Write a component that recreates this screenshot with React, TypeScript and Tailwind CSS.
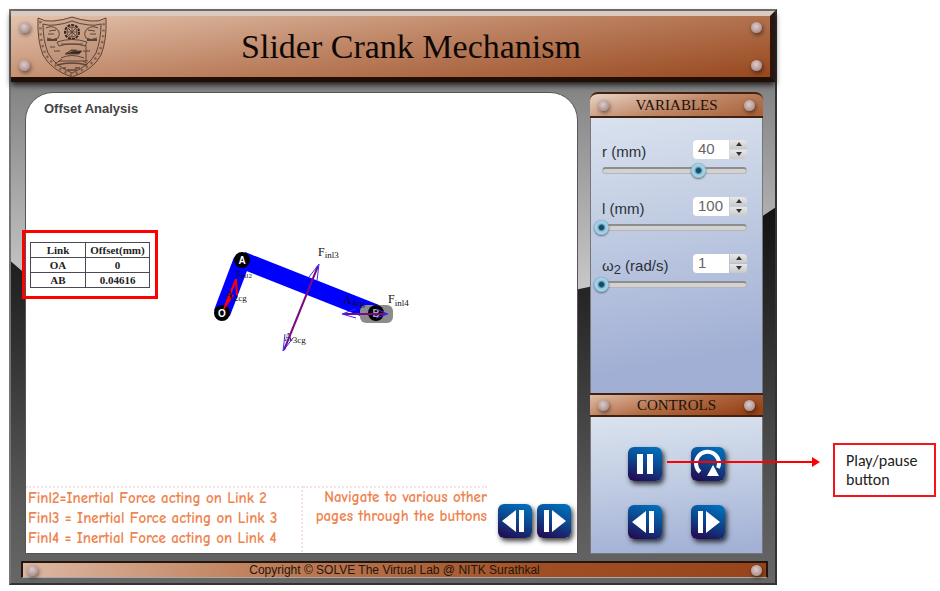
import { useState } from 'react';

const serif = 'font-["Liberation_Serif",serif]';

function Rivet() {
  return (
    <span
      aria-hidden="true"
      className="block h-[11px] w-[11px] shrink-0 rounded-full bg-[radial-gradient(circle_at_45%_40%,#dccbcb_0%,#bda3a3_50%,#8f7676_100%)] shadow-[1px_2px_4px_rgba(0,0,0,0.5)]"
    />
  );
}

function Emblem() {
  return (
    <svg viewBox="0 0 70 62" className="h-[62px] w-[70px]" fill="none" stroke="#5f4436" strokeWidth="1" aria-label="Institute emblem" role="img">
      <path d="M1 2 Q8 6 16 5 Q27 4 35 1 Q43 4 54 5 Q62 6 69 2 Q70 24 64 39 Q56 54 35 61 Q14 54 6 39 Q0 24 1 2Z" fill="#b08a74" fillOpacity="0.4" />
      <path d="M6 8 Q12 10 18 9 Q28 8 35 5 Q42 8 52 9 Q58 10 64 8 Q64 24 59 37 Q52 50 35 57 Q18 50 11 37 Q6 24 6 8Z" />
      <path d="M3.500 5 Q2.500 25 8.500 38 Q17 52 35 59 Q53 52 61.500 38 Q67.500 25 66.500 5" strokeWidth="2.500" strokeDasharray="2 4" opacity="0.65" />
      <circle cx="35" cy="16" r="7" stroke="#33241c" strokeWidth="2" strokeDasharray="3 1" />
      <circle cx="35" cy="16" r="5" />
      <path d="M30 16h10M35 11v10M31.500 12.500l7 7M38.500 12.500l-7 7" />
      <path d="M9 12q6-3 11 1q4 4 1 9q-5 3-11 0M61 12q-6-3-11 1q-4 4-1 9q5 3 11 0M12 15l7-1M11 18h6M58 15l-7-1M59 18h-6" />
      <path d="M10 24h10M50 24h10" strokeWidth="2" />
      <path d="M20 26q15-5 30 0l-2 4q-13-4-26 0ZM24 28h22" />
      <path d="M13 31h5M17 35h6M24 42q10-5 23 0M22 45h29M49 29v16M46 35h7M18 48l7-5M51 48l-5-3" />
      <path d="M28 38h14l3-3h-12ZM31 37l3-3h6" fill="#33241c" />
      <path d="M20 49q15-4 30 0M26 52h3M38 52h5M30 54h10" strokeWidth="1.500" />
    </svg>
  );
}

type IconName = 'pause' | 'replay' | 'back' | 'forward';

function IconButton({ icon, label, onClick }: { icon: IconName; label: string; onClick?: () => void }) {
  return (
    <button
      type="button"
      aria-label={label}
      onClick={onClick}
      className="h-[34px] w-[34px] shrink-0 rounded-md bg-[linear-gradient(200deg,#0070bd_5%,#0b4a91_45%,#211057_90%)] shadow-[2px_3px_5px_rgba(0,0,0,0.75)]"
    >
      <svg viewBox="0 0 34 34" className="h-full w-full" fill="#fff">
        {icon === 'pause' && <path d="M9 7h6v20H9zM19 7h6v20h-6z" />}
        {icon === 'back' && <path d="M4 17 18 6v22zM21 6h5v22h-5z" />}
        {icon === 'forward' && <path d="M7 6h5v22H7zM15 6l14 11-14 11z" />}
        {icon === 'replay' && (
          <>
            <path d="M9 25 A11.500 11.500 0 1 1 27 21" fill="none" stroke="#fff" strokeWidth="4" />
            <path d="M16 29 22 18 28 29z" />
          </>
        )}
      </svg>
    </button>
  );
}

function PanelHeading({ children, rounded }: { children: string; rounded?: boolean }) {
  return (
    <div
      className={`flex items-center justify-between border-y-2 border-[#42210f] px-2 ${
        rounded
          ? 'h-[26px] rounded-t-lg bg-[linear-gradient(165deg,#e6cdbd_5%,#c08a6a_50%,#a9633b_95%)]'
          : 'h-6 bg-[linear-gradient(165deg,#e0bda6_0%,#b06a42_50%,#974217_90%)]'
      }`}
    >
      <Rivet />
      <h2 className={`${serif} text-[15px] leading-5 text-[#1c100a]`}>{children}</h2>
      <Rivet />
    </div>
  );
}

interface VariableProps {
  id: string;
  label: React.ReactNode;
  min: number;
  max: number;
  initial: number;
}

const stepper = 'flex flex-1 items-center justify-center bg-[linear-gradient(180deg,#e8e8e8,#c9c9c9)]';

function Variable({ id, label, min, max, initial }: VariableProps) {
  const [value, setValue] = useState(initial);
  const update = (next: number) => setValue(Math.min(max, Math.max(min, next || min)));
  return (
    <div className="pb-[18px]">
      <div className="flex h-5 items-center pl-2 pr-2">
        <label htmlFor={id} className="flex-1 pt-[6px] text-[15px] leading-5 text-[#2b3038]">
          {label}
        </label>
        <input
          id={id}
          inputMode="numeric"
          value={value}
          onChange={(e) => update(Number(e.target.value))}
          className="h-[19px] w-9 rounded-l-sm bg-white pl-[5px] text-[15px] leading-5 text-[#666]"
        />
        <div className="ml-px flex h-[19px] w-[17px] flex-col gap-px">
          <button type="button" aria-label="Increase" onClick={() => update(value + 1)} className={`${stepper} rounded-tr-sm`}>
            <svg viewBox="0 0 8 4" className="h-1 w-2" fill="#333"><path d="M4 0 7 4H1z" /></svg>
          </button>
          <button type="button" aria-label="Decrease" onClick={() => update(value - 1)} className={`${stepper} rounded-br-sm`}>
            <svg viewBox="0 0 8 4" className="h-1 w-2" fill="#333"><path d="M4 4 1 0h6z" /></svg>
          </button>
        </div>
      </div>
      <div className="mt-[3px] grid items-center">
        <span className="col-start-1 row-start-1 mx-2 h-[7px] rounded-full border border-t-2 border-[#b5b5b5] border-t-[#8d8d8d] bg-[#d2d2d2]" />
        <input
          type="range"
          aria-label={`${id} slider`}
          min={min}
          max={max}
          value={value}
          onChange={(e) => update(Number(e.target.value))}
          className="col-start-1 row-start-1 h-4 w-full appearance-none bg-transparent [&::-webkit-slider-thumb]:h-[15px] [&::-webkit-slider-thumb]:w-[15px] [&::-webkit-slider-thumb]:appearance-none [&::-webkit-slider-thumb]:rounded-full [&::-webkit-slider-thumb]:bg-[radial-gradient(circle,#174a63_0px,#174a63_2px,#8fc6df_4px,#a9d6ea_6px,#6fa3bd_8px)] [&::-webkit-slider-thumb]:shadow-[0_1px_2px_rgba(0,0,0,0.5)]"
        />
      </div>
    </div>
  );
}

function Linkage() {
  return (
    <svg viewBox="200 230 220 130" className="absolute left-[174px] top-[137px] h-[130px] w-[220px]" role="img" aria-label="Slider crank linkage">
      <path d="M222 313 242 260" stroke="#0000ff" strokeWidth="17" />
      <path d="M242 260 376 313" stroke="#0000ff" strokeWidth="17" />
      <rect x="360" y="305" width="33" height="18" rx="6" fill="#8c8c8c" />
      <g fontFamily="Liberation Sans, sans-serif" fontSize="10" fontWeight="bold" textAnchor="middle">
        <circle cx="222" cy="313" r="8" fill="#000" />
        <text x="222" y="317" fill="#fff">O</text>
        <circle cx="242" cy="260" r="8" fill="#000" />
        <text x="242" y="264" fill="#fff">A</text>
        <circle cx="376" cy="313" r="8" fill="#000" />
        <text x="376" y="317" fill="#aaa">B</text>
      </g>
      <path d="M224 309 236 279M236 279l-6 16M236 279l1 16M225 307l4-12M225 307l8-12" stroke="#ff0000" strokeWidth="2" fill="none" />
      <g fontFamily="Liberation Serif, serif" fontSize="12" fill="#111">
        <text x="225" y="299">A<tspan fontSize="9" dy="2">2cg</tspan></text>
        <text x="236" y="277" fontSize="9">F<tspan fontSize="7" dy="1">inl2</tspan></text>
        <text x="318" y="256">F<tspan fontSize="9" dy="2">inl3</tspan></text>
        <text x="284" y="341">A<tspan fontSize="9" dy="2">3cg</tspan></text>
        <text x="343" y="304">A<tspan fontSize="9" dy="2">4cg</tspan></text>
        <text x="388" y="303">F<tspan fontSize="9" dy="3">inl4</tspan></text>
      </g>
      <path d="M318 266 284 350" stroke="#7a0a86" strokeWidth="2" />
      <path d="M319 264 309 277M319 264 317 281M283 351 285 334M283 351 293 338" stroke="#3c2cff" strokeWidth="1" />
      <path d="M343 314H387" stroke="#7a0a86" strokeWidth="2" />
      <path d="M342 314 356 309M342 314 356 318M388 314 376 309M388 314 376 318" stroke="#3c2cff" strokeWidth="1" />
    </svg>
  );
}

function OffsetTable() {
  const rows = [
    ['OA', '0'],
    ['AB', '0.04616'],
  ];
  const cell = 'h-[15px] border border-[#4a4a55] p-0 text-center font-bold';
  return (
    <div className="-ml-1 mt-[113px] w-[136px] border-[3px] border-[#ff0000] px-[5px] pb-2 pt-[9px]">
      <table className={`${serif} w-full table-fixed border-collapse text-[11px] leading-[13px] text-[#222]`}>
        <thead>
          <tr>
            <th className={`${cell} w-[55px]`}>Link</th>
            <th className={cell}>Offset(mm)</th>
          </tr>
        </thead>
        <tbody>
          {rows.map(([link, offset]) => (
            <tr key={link}>
              <td className={cell}>{link}</td>
              <td className={cell}>{offset}</td>
            </tr>
          ))}
        </tbody>
      </table>
    </div>
  );
}

export default function App() {
  const [running, setRunning] = useState(true);
  return (
    <div className='flex items-start bg-white pl-[9px] pt-[9px] font-["Liberation_Sans",Arial,sans-serif]'>
      <main className="relative isolate min-w-0 flex-1 border-2 border-[#747474] border-b-[#333] border-r-[#333] bg-[linear-gradient(180deg,#7a7a7a_0px,#858585_80px,#cccccc_290px)]">
        <svg aria-hidden="true" viewBox="0 0 764 573" preserveAspectRatio="none" className="absolute inset-0 -z-10 h-full w-full">
          <defs>
            <linearGradient id="steel" x1="0" y1="0" x2="0" y2="1">
              <stop offset="0" stopColor="#121212" />
              <stop offset="0.35" stopColor="#303030" />
              <stop offset="0.8" stopColor="#5a5a5a" />
              <stop offset="1" stopColor="#666666" />
            </linearGradient>
          </defs>
          <path d="M0 251 L14 263 Q280 330 566 279 Q680 256 752 205 L764 197 V573 H0Z" fill="url(#steel)" />
        </svg>

        <header className="flex h-[71px] items-stretch border-b-[5px] border-r-[5px] border-t-[5px] border-b-[#210e04] border-r-[#2b170e] border-t-[#dacac0] bg-[linear-gradient(172deg,#e3c3ad_0%,#bd8363_48%,#994a20_98%)] px-2 shadow-[0_3px_6px_rgba(0,0,0,0.8)]">
          <div className="flex flex-col justify-between py-[6px]">
            <Rivet />
            <Rivet />
          </div>
          <div className="ml-[7px] w-[70px]">
            <Emblem />
          </div>
          <h1 className={`${serif} flex-1 pr-[36px] text-center text-[34px] leading-[62px] text-[#0d0805]`}>Slider Crank Mechanism</h1>
          <div className="flex flex-col justify-between py-[6px]">
            <Rivet />
            <Rivet />
          </div>
        </header>

        <div className="flex gap-3 pb-[7px] pl-[14px] pr-3 pt-[10px]">
          <section className="relative flex min-w-0 flex-1 flex-col rounded-t-[28px] border border-[#555] bg-white">
            <h2 className="pl-[18px] pt-2 text-[13px] font-bold leading-4 text-[#444]">Offset Analysis</h2>
            <OffsetTable />
            <Linkage />
            <div className='mt-[187px] flex pb-px pr-[6px] font-["Comic_Sans_MS","Comic_Neue",Lato,sans-serif] text-[15px] font-bold text-[#ee8450]'>
              <div className="w-[277px] border-r-2 border-t-2 border-dotted border-[#f5e3e3] pb-1 leading-5">
                <p className="pl-[2px]">Finl2=Inertial Force acting on Link 2</p>
                <p className="pl-[2px]">Finl3 = Inertial Force acting on Link 3</p>
                <p className="pl-[2px]">Finl4 = Inertial Force acting on Link 4</p>
              </div>
              <p className="min-w-0 flex-1 border-t-2 border-dotted border-[#f5e3e3] text-right leading-[19px]">
                Navigate to various other
                <br />
                pages through the buttons
              </p>
              <div className="ml-[11px] flex gap-[5px] pt-[18px]">
                <IconButton icon="back" label="Previous page" />
                <IconButton icon="forward" label="Next page" />
              </div>
            </div>
          </section>

          <aside className="flex w-[173px] shrink-0 flex-col">
            <PanelHeading rounded>VARIABLES</PanelHeading>
            <section className="h-[275px] border-x border-[#777] bg-[linear-gradient(170deg,#d9e2ee_0%,#bcc8e0_45%,#a1afd5_85%)] pl-[3px] pr-[7px] pt-[21px]">
              <Variable id="r" label="r (mm)" min={20} max={50} initial={40} />
              <Variable id="l" label="l (mm)" min={100} max={200} initial={100} />
              <Variable
                id="omega"
                label={<>ω<sub className="text-[13px] leading-none">2</sub> (rad/s)</>}
                min={1}
                max={10}
                initial={1}
              />
            </section>
            <PanelHeading>CONTROLS</PanelHeading>
            <section className="flex flex-1 justify-center border border-t-0 border-[#777] bg-[linear-gradient(175deg,#dae3ee_0%,#bfcbe2_50%,#a3b1d6_95%)] pt-[30px]">
              <div className="grid h-fit grid-cols-2 gap-x-[29px] gap-y-6">
                <IconButton icon={running ? 'pause' : 'forward'} label="Play or pause" onClick={() => setRunning(!running)} />
                <IconButton icon="replay" label="Restart" />
                <IconButton icon="back" label="Step back" />
                <IconButton icon="forward" label="Step forward" />
              </div>
            </section>
          </aside>
        </div>

        <footer className="mb-[5px] ml-[10px] mr-[7px] flex h-[17px] items-center justify-between border-b border-l-2 border-r-2 border-t-2 border-[#24150e] border-b-[#a9a9a9] bg-[linear-gradient(90deg,#dcb8a2_0%,#c0825e_30%,#a04f24_70%,#97441a_100%)] px-1">
          <Rivet />
          <small className="text-[12px] leading-4 text-[#24140b]">Copyright © SOLVE The Virtual Lab @ NITK Surathkal</small>
          <Rivet />
        </footer>
      </main>

      <div className="w-[163px] shrink-0 pl-14 pr-1 pt-[434px]">
        <div className="relative z-10 border-2 border-[#f5141c] bg-white py-[6px] pl-[11px] font-[Carlito,Lato,sans-serif] text-[16px] leading-[19px] text-[#222]">
          Play/pause
          <br />
          button
          <svg aria-hidden="true" viewBox="0 0 153 10" className="pointer-events-none absolute right-full top-[12px] mr-[15px] h-[10px] w-[153px]" fill="#ff0000">
            <path d="M0 4h145V0l8 5-8 5V6H0z" />
          </svg>
        </div>
      </div>
    </div>
  );
}
